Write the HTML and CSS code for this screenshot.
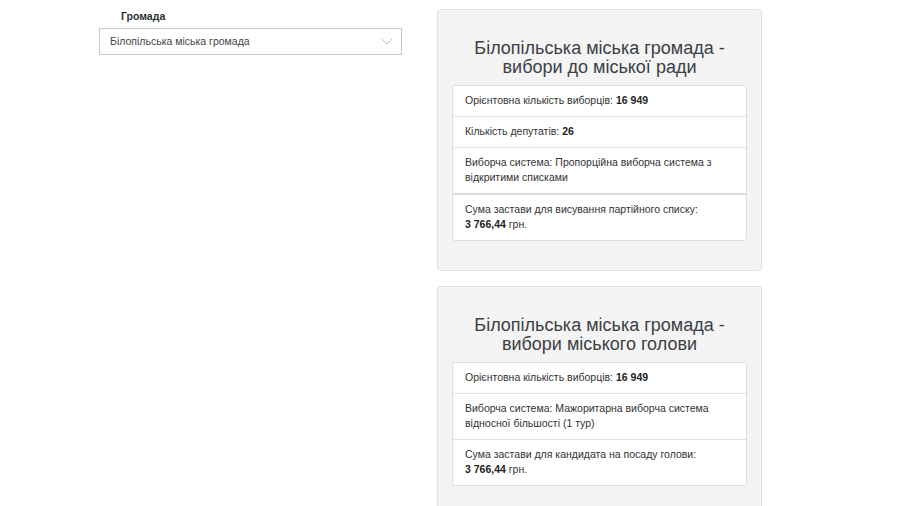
FILE: index.html
```html
<!DOCTYPE html>
<html lang="uk">
<head>
  <meta charset="UTF-8">
  <meta name="viewport" content="width=device-width, initial-scale=1.0">
  <title>Вибори - Білопільська міська громада</title>
  <link rel="stylesheet" href="styles.css">
</head>
<body>
  <div class="page">
    <div class="filter">
      <label class="filter-label" for="hromada">Громада</label>
      <div class="select-box">
        <span id="hromada">Білопільська міська громада</span>
        <svg class="chevron" width="12" height="7" viewBox="0 0 12 7">
          <path d="M0.5 0.5 L6 6 L11.5 0.5" fill="none" stroke="#c4c4c4" stroke-width="1"/>
        </svg>
      </div>
    </div>

    <div class="elections">
      <!-- вибори до ради -->
      <div class="well">
        <h2 class="well-title">Білопільська міська громада - вибори до міської ради</h2>
        <ul class="list-group">
          <li class="list-item">Орієнтовна кількість виборців: <b>16 949</b></li>
          <li class="list-item">Кількість депутатів: <b>26</b></li>
          <li class="list-item thick">Виборча система: Пропорційна виборча система з відкритими списками</li>
          <li class="list-item">Сума застави для висування партійного списку: <span class="sum"><b>3 766,44</b> грн.</span></li>
        </ul>
      </div>

      <!-- вибори голови -->
      <div class="well">
        <h2 class="well-title">Білопільська міська громада - вибори міського голови</h2>
        <ul class="list-group">
          <li class="list-item">Орієнтовна кількість виборців: <b>16 949</b></li>
          <li class="list-item">Виборча система: Мажоритарна виборча система відносної більшості (1 тур)</li>
          <li class="list-item">Сума застави для кандидата на посаду голови: <span class="sum"><b>3 766,44</b> грн.</span></li>
        </ul>
      </div>
    </div>
  </div>
</body>
</html>
```

FILE: styles.css
```css
body {
  font-family: 'Liberation Sans', Arial, sans-serif;
  font-size: 10.5px;
  line-height: 15px;
  margin: 0;
  background-color: #fff;
  color: #333;
}
.page {
  display: flex;
  align-items: flex-start;
  gap: 35px;
  padding: 9px 0 0 99px;
}
.filter {
  width: 303px;
}
.filter-label {
  display: block;
  font-weight: bold;
  color: #2c2f33;
  padding-left: 22px;
  margin-bottom: 4px;
}
.select-box {
  box-sizing: border-box;
  height: 27px;
  border: 1px solid #c9c9c9;
  display: flex;
  align-items: center;
  justify-content: space-between;
  padding: 0 8px 0 10px;
  color: #444;
}
.elections {
  width: 325px;
  display: flex;
  flex-direction: column;
  gap: 15px;
}
.well {
  background-color: #f4f4f4;
  border: 1px solid #e1e1e1;
  border-radius: 3px;
  padding: 29px 14px 29px;
}
.well-title {
  margin: 0 0 8px;
  font-size: 18px;
  font-weight: normal;
  line-height: 19px;
  text-align: center;
  color: #3b4046;
  padding: 0 10px;
}
.list-group {
  list-style: none;
  margin: 0;
  padding: 0;
  background-color: #fff;
  border: 1px solid #dedede;
  border-radius: 3px;
}
.list-item {
  padding: 7px 12px 8px;
  border-top: 1px solid #e3e3e3;
}
.list-item:first-child {
  border-top: none;
}
.list-item.thick + .list-item {
  border-top: 2px solid #dcdcdc;
}
.list-item b {
  color: #222;
}
.sum {
  white-space: nowrap;
}
```
